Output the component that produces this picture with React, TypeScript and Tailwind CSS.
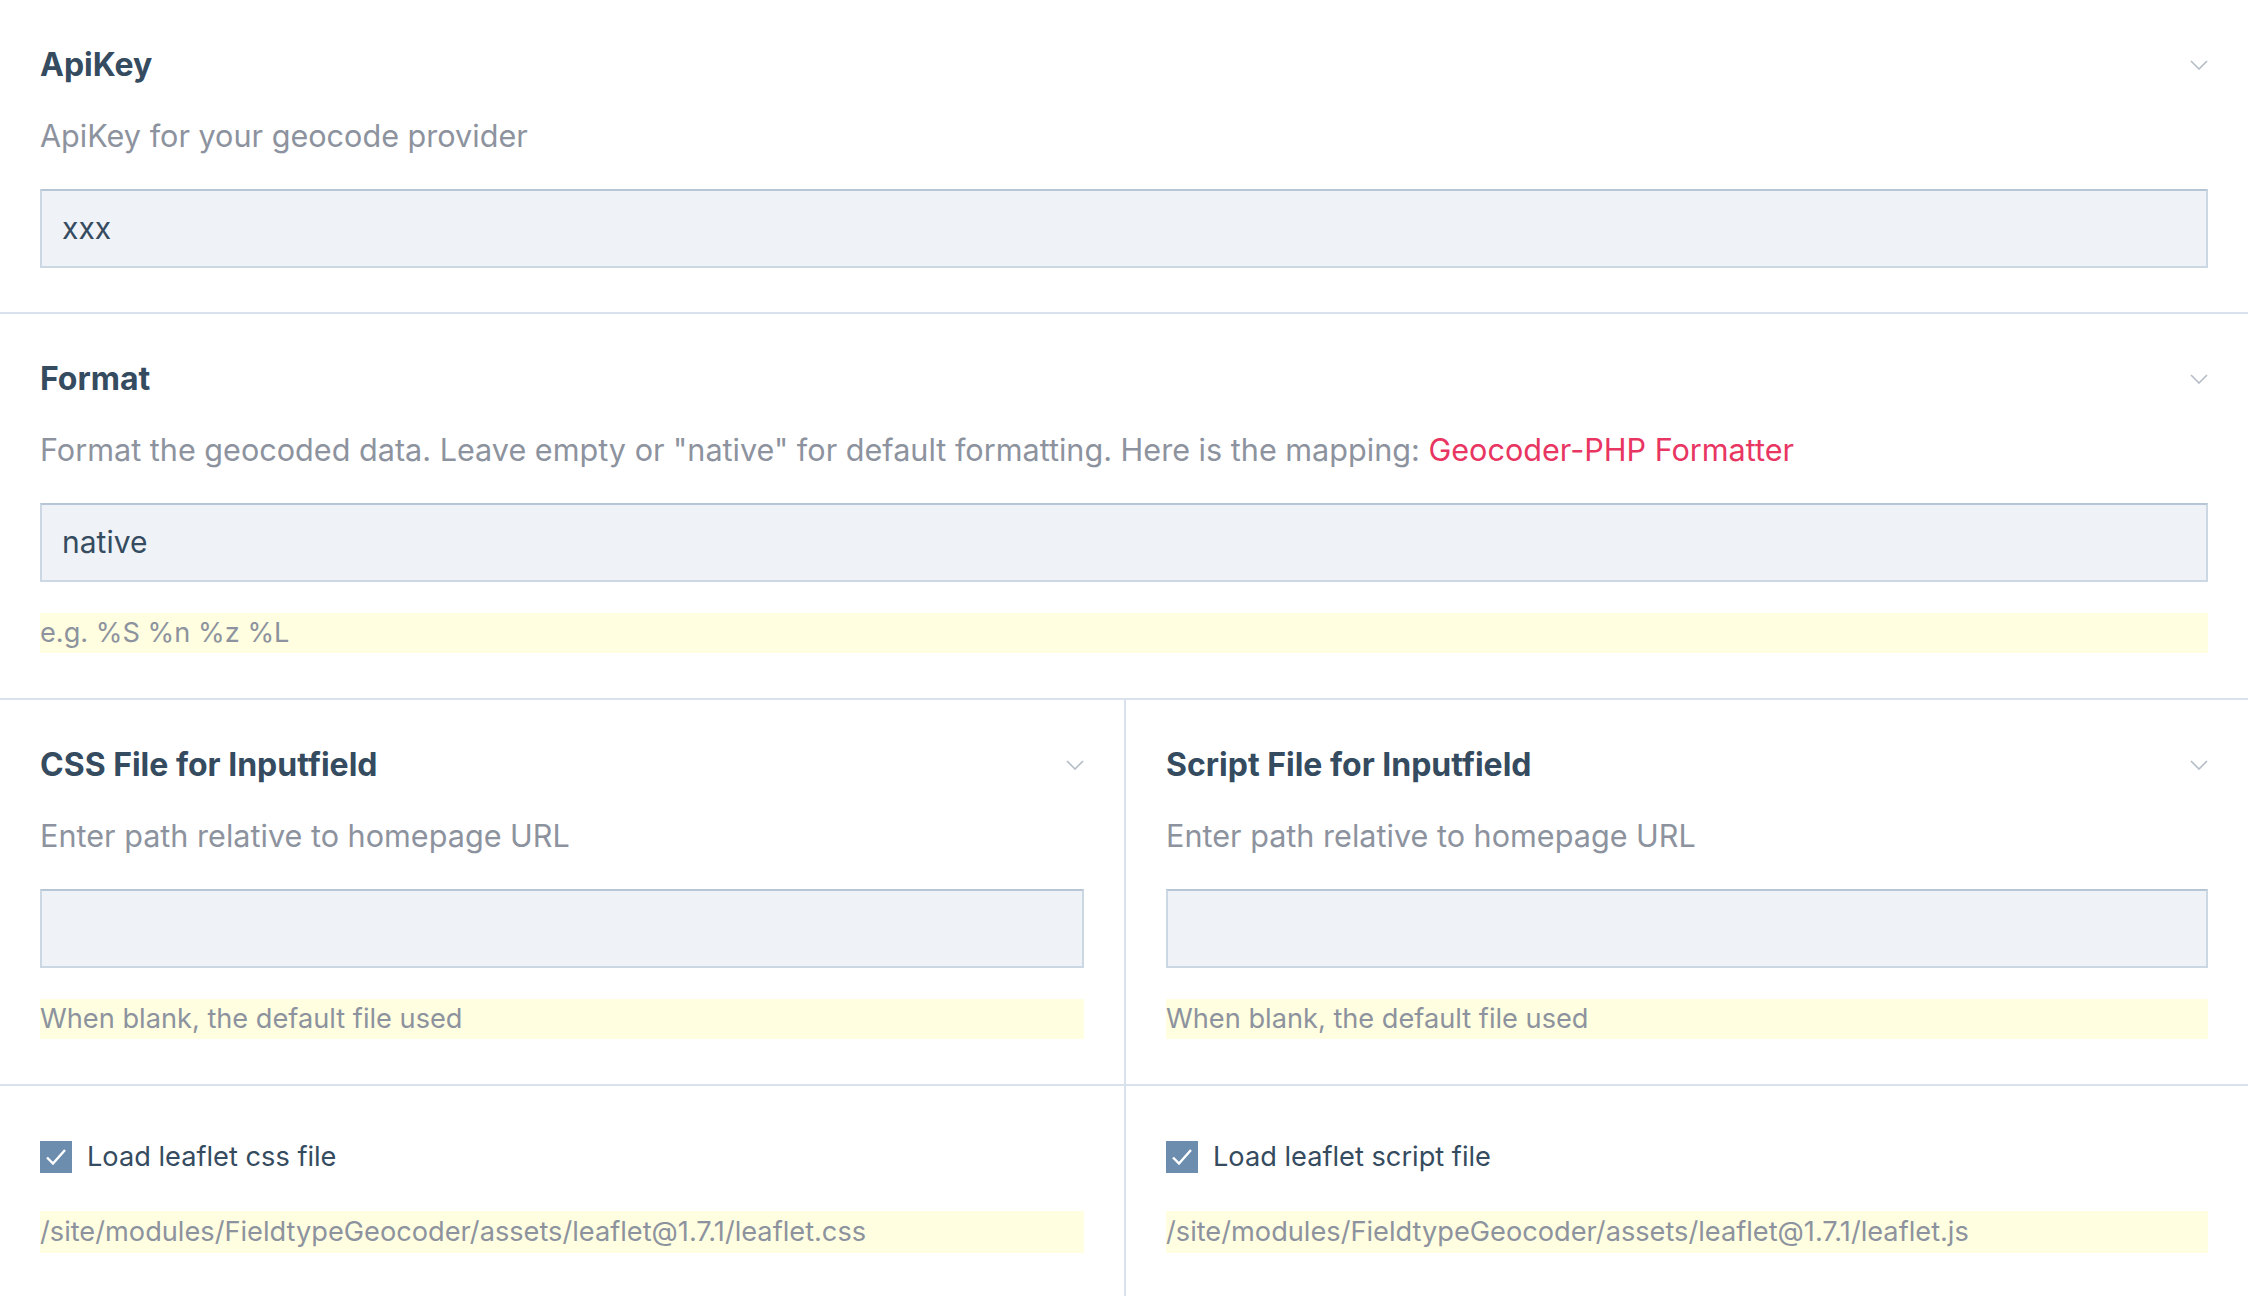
const font = { fontFamily: 'Inter, "Noto Sans", sans-serif' }

function Chevron() {
  return (
    <svg width="18" height="10" viewBox="0 0 18 10" fill="none" className="shrink-0">
      <path d="M1 1l8 8 8-8" stroke="#b4bcc6" strokeWidth="1.6" />
    </svg>
  )
}

function Field({
  label,
  desc,
  value,
  notes,
}: {
  label: string
  desc: React.ReactNode
  value?: string
  notes?: string
}) {
  return (
    <div className={`px-10 pt-[41px] ${notes ? 'pb-[45px]' : 'pb-[44px]'}`}>
      <div className="flex items-center justify-between h-12">
        <h2 className="text-[32px] font-bold text-[#354b60] leading-[48px]">{label}</h2>
        <Chevron />
      </div>
      <p className="mt-[25px] text-[30.6px] leading-[44px] text-[#8d939e]">{desc}</p>
      <div className="mt-[31px] h-[79px] bg-[#eff3f7] border-2 border-[#cbd7e3] border-t-[#b7c6d6] flex items-center px-[20px] text-[30px] text-[#354b60]">
        {value}
      </div>
      {notes && (
        <div className="mt-[31px] h-10 bg-[#fffee0] flex items-center text-[27.2px] text-[#8d939e]">
          {notes}
        </div>
      )}
    </div>
  )
}

function CheckField({ label, path }: { label: string; path: string }) {
  return (
    <div className="px-10 pt-[55px] pb-[44px]">
      <div className="flex items-center gap-[15px] h-8">
        <span className="w-8 h-8 bg-[#6c8dae] flex items-center justify-center">
          <svg width="22" height="18" viewBox="0 0 22 18" fill="none">
            <path d="M2 9.5l6 6L20 2" stroke="#fff" strokeWidth="2.4" />
          </svg>
        </span>
        <span className="text-[27.2px] text-[#354b60]">{label}</span>
      </div>
      <div className="mt-[38px] h-[42px] bg-[#fffee0] flex items-center text-[27.2px] text-[#8d939e]">
        {path}
      </div>
    </div>
  )
}

export default function App() {
  return (
    <div className="w-[2248px] min-h-[1296px] bg-white" style={font}>
      <Field label="ApiKey" desc="ApiKey for your geocode provider" value="xxx" />
      <div className="border-t-2 border-[#d9e2ec]">
        <Field
          label="Format"
          desc={
            <>
              Format the geocoded data. Leave empty or "native" for default formatting. Here is the mapping:{' '}
              <a href="#" className="text-[#e83561]">Geocoder-PHP Formatter</a>
            </>
          }
          value="native"
          notes="e.g. %S %n %z %L"
        />
      </div>
      <div className="border-t-2 border-[#d9e2ec] grid grid-cols-2">
        <Field label="CSS File for Inputfield" desc="Enter path relative to homepage URL" notes="When blank, the default file used" />
        <div className="border-l-2 border-[#d9e2ec]">
          <Field label="Script File for Inputfield" desc="Enter path relative to homepage URL" notes="When blank, the default file used" />
        </div>
      </div>
      <div className="border-t-2 border-[#d9e2ec] grid grid-cols-2">
        <CheckField label="Load leaflet css file" path="/site/modules/FieldtypeGeocoder/assets/leaflet@1.7.1/leaflet.css" />
        <div className="border-l-2 border-[#d9e2ec]">
          <CheckField label="Load leaflet script file" path="/site/modules/FieldtypeGeocoder/assets/leaflet@1.7.1/leaflet.js" />
        </div>
      </div>
    </div>
  )
}
